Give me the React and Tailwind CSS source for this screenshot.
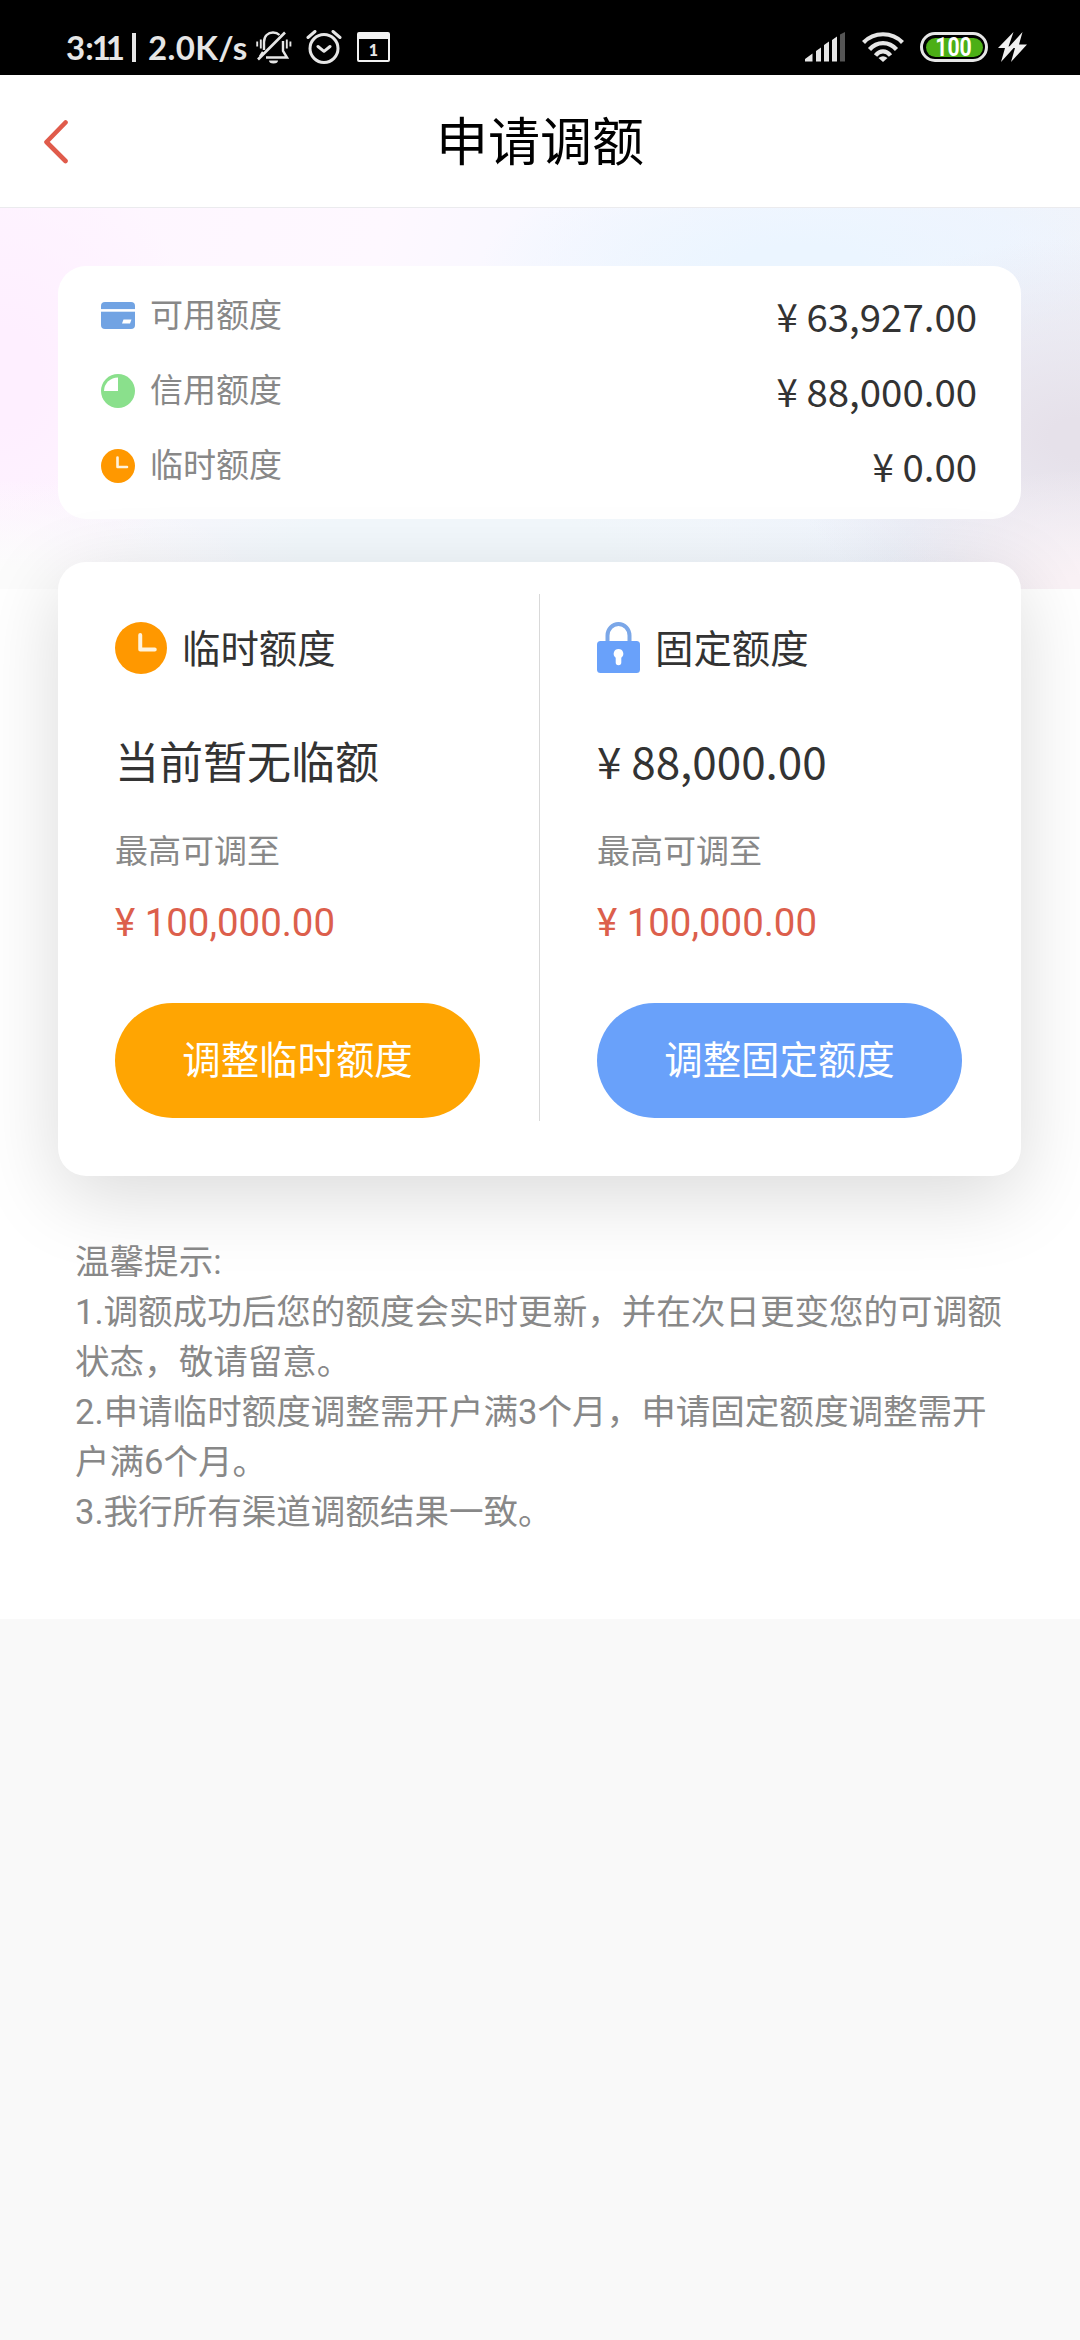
import React from 'react';

const SUMMARY = [
  { label: '可用额度', amount: '¥ 63,927.00', Icon: CardIcon },
  { label: '信用额度', amount: '¥ 88,000.00', Icon: PieIcon },
  { label: '临时额度', amount: '¥ 0.00', Icon: ClockIcon },
];

const TIPS = [
  '温馨提示:',
  '1.调额成功后您的额度会实时更新，并在次日更变您的可调额',
  '状态，敬请留意。',
  '2.申请临时额度调整需开户满3个月，申请固定额度调整需开',
  '户满6个月。',
  '3.我行所有渠道调额结果一致。',
];

function CardIcon() {
  return (
    <svg viewBox="0 0 34 34" className="w-[34px] h-[34px]">
      <rect x="0" y="3" width="34" height="27" rx="4" fill="#71a3e3" />
      <rect x="0" y="10.1" width="34" height="2.6" fill="#fff" />
      <path d="M22.5 20.5h8l-1.5 4h-8z" fill="#fff" />
    </svg>
  );
}

function PieIcon() {
  return (
    <svg viewBox="0 0 34 34" className="w-[34px] h-[34px]">
      <circle cx="17" cy="17" r="17" fill="#8ae08c" />
      <path d="M17 3.4V17H3A14 14 0 0 1 17 3.4z" fill="#fff" />
    </svg>
  );
}

function ClockIcon({ className = 'w-[34px] h-[34px]' }) {
  return (
    <svg viewBox="0 0 34 34" className={className}>
      <circle cx="17" cy="17" r="17" fill="#ff9800" />
      <path d="M16.5 8.5v9.5h9.5" fill="none" stroke="#fff3dc" strokeWidth="2.6" strokeLinecap="round" strokeLinejoin="round" />
    </svg>
  );
}

function LockIcon() {
  return (
    <svg viewBox="0 0 43 52" className="w-[43px] h-[52px]">
      <path d="M10.5 20V13.5a11 11.5 0 0 1 22 0V20" fill="none" stroke="#7ba7e8" strokeWidth="4" />
      <rect x="0" y="19" width="43" height="32" rx="3.5" fill="#69a1fa" />
      <path d="M21.5 27a4.8 4.8 0 0 1 2.8 8.7V40.5a2.8 2.8 0 0 1-5.6 0V35.7A4.8 4.8 0 0 1 21.5 27z" fill="#fff" />
    </svg>
  );
}

function StatusBar() {
  return (
    <div className="flex h-[75px] bg-black pl-[66px] text-[#e6e6e6] font-['Lato','Noto_Sans_CJK_SC',sans-serif]">
      <div className="flex h-[94px] items-center text-[33px] font-bold whitespace-pre leading-none">
        <span className="w-[66px]">
          3<span className="tracking-[-2px]">:</span>
          <span className="tracking-[-5px]">11</span>
        </span>
        <span className="block h-[29px] w-[4px] bg-[#e6e6e6]" />
        <span className="ml-[12px] w-[108px] tracking-[0.4px]">2.0K/s</span>
      </div>
      <div className="flex items-start pt-[30px]">
        {/* muted bell */}
        <svg viewBox="0 0 36 34" className="h-[34px] w-[36px]" fill="none" stroke="#e6e6e6" strokeWidth="2.4">
          <path d="M8 20V12C8 6 12 2.5 17 2.5c3 0 5 1 6.5 2.5M27 11v10l4 6.5H10M4 26.5L7 22" />
          <path d="M2 29.5L29 2.5" strokeWidth="2.6" />
          <path d="M1.2 11.5v5M4.8 9.5v9M30.8 9.5v9M34.4 11.5v5" strokeWidth="1.9" />
          <path d="M13 30.5h9a4.5 3 0 0 1-9 0z" fill="#e6e6e6" stroke="none" />
        </svg>
        {/* alarm */}
        <svg viewBox="0 0 36 34" className="ml-[14px] h-[34px] w-[36px]" fill="none" stroke="#e6e6e6" strokeWidth="3" strokeLinecap="round" strokeLinejoin="round">
          <circle cx="18" cy="18.5" r="14" />
          <path d="M12 16.5l6 4.8 6-4.8M2 7.5l7-6M34 7.5l-7-6" />
        </svg>
        {/* calendar */}
        <div className="ml-[15px] mt-[2px] flex h-[30px] w-[33px] items-center justify-center rounded-[2px] border-2 border-t-[7px] border-[#f2f2f2] text-[16px] font-black leading-none">
          1
        </div>
      </div>
      <div className="ml-auto mr-[53px] flex items-start pt-[32px]">
        <svg viewBox="0 0 41 30" className="h-[30px] w-[41px]" fill="#e6e6e6">
          <path d="M0 29.5V27L7.5 21.5V29.5zM11 29.5V19L16 15.5V29.5zM19 29.5V13L24 9.5V29.5zM27 29.5V8L32 4.5V29.5z" />
          <path d="M35 29.5V2.5L40 0V29.5z" fill="#555" />
        </svg>
        <svg viewBox="0 0 42 30" className="ml-[16px] h-[30px] w-[42px]" fill="none" stroke="#e6e6e6" strokeWidth="4.2">
          <path d="M1.5 10.5C12 -0.5 30 -0.5 40.5 10.5M7.5 17.5C15 9 27 9 34.5 17.5M13.5 23.5C18 18 24 18 28.5 23.5" />
          <path d="M16.5 26q4.5-3.5 9 0L21 30z" fill="#e6e6e6" stroke="none" />
        </svg>
        <div className="ml-[16px] flex h-[30px] w-[68px] items-center justify-center rounded-full border-[3px] border-[#e6e6e6]">
          <div className="flex h-[19px] w-[57px] items-center justify-center rounded-full bg-[#4caf16] font-['Roboto'] text-[25px] font-bold leading-none text-white">
            <span className="inline-block scale-x-85">100</span>
          </div>
        </div>
        <svg viewBox="0 0 29 30" className="ml-[10px] h-[30px] w-[29px]" fill="#f0f0f0">
          <path d="M15.5 0L0 16h7L3 30 17 14.5h-6.5z" />
          <path d="M24.5 0L10 16h7L13 30 29 12.5h-8z" />
        </svg>
      </div>
    </div>
  );
}

function LimitColumn({ icon, title, current, max, action, actionClass }) {
  return (
    <div className="flex w-[481px] flex-col pl-[57px] pt-[60px]">
      <div className="flex h-[52px] items-center">
        {icon}
        <span className="ml-[15px] pb-[3px] text-[38.4px] leading-[49px] text-[#333]">{title}</span>
      </div>
      <div className="mt-[53px] h-[66px] text-[44px] leading-[66px] text-[#333] whitespace-nowrap">{current}</div>
      <div className="mt-[31px] h-[50px] text-[33px] leading-[50px] text-[#888]">最高可调至</div>
      <div className="mt-[20px] h-[58px] text-[38.4px] leading-[58px] text-[#dc5f4c] font-['Roboto'] whitespace-nowrap">{max}</div>
      <button type="button" className={`mt-[51px] h-[115px] w-[365px] rounded-full pb-[7px] text-[38.4px] leading-none text-white ${actionClass}`}>
        {action}
      </button>
    </div>
  );
}

export default function App() {
  return (
    <div className="flex h-[2340px] w-[1080px] flex-col overflow-hidden bg-[#f9f9f9] font-['Noto_Sans_CJK_SC',sans-serif]">
      <StatusBar />

      <header className="flex h-[133px] items-center border-b border-[#ebebee] bg-white">
        <svg viewBox="0 0 26 44" className="ml-[43px] mt-px h-[44px] w-[26px]" fill="none" stroke="#e05b4b" strokeWidth="4.6" strokeLinecap="round" strokeLinejoin="round">
          <path d="M22.5 2.5L3.5 22L22.5 41" />
        </svg>
        <h1 className="mr-[69px] flex-1 pb-[4px] text-center text-[52px] leading-none text-black">申请调额</h1>
      </header>

      <main className="h-[1411px] shrink-0 bg-white">
        <div className="h-[381px] bg-[radial-gradient(ellipse_260px_110px_at_0px_381px,#fcfcfc_20%,#fcfcfc00_100%),radial-gradient(ellipse_200px_120px_at_1080px_381px,#faf2f6_10%,#faf2f600_100%),radial-gradient(ellipse_300px_200px_at_1080px_230px,#e6e1ea_10%,#e6e1ea00_100%),radial-gradient(ellipse_320px_110px_at_800px_60px,#ebf5ff_20%,#ebf5ff00_100%),radial-gradient(ellipse_200px_240px_at_0px_170px,#feefff_20%,#feefff00_100%),radial-gradient(ellipse_500px_130px_at_450px_340px,#f2f8fc_30%,#f2f8fc00_100%),linear-gradient(105deg,#fef5ff_0%,#fef8ff_33%,#f8f8ff_46%,#f3f6fe_65%,#eff4fd_85%,#f1f3f9_100%)] px-[58px] pt-[58px]">
          <section className="flex h-[253px] w-[963px] flex-col rounded-[28px] bg-white pl-[43px] pr-[44px] pt-[12px]">
            {SUMMARY.map(({ label, amount, Icon }) => (
              <div key={label} className="flex h-[75px] items-center">
                <div className="pt-px">
                  <Icon />
                </div>
                <span className="ml-[15px] pb-[4px] text-[33px] leading-[71px] text-[#888]">{label}</span>
                <span className="ml-auto text-[38.4px] leading-[75px] text-[#333]">{amount}</span>
              </div>
            ))}
          </section>
        </div>

        <section className="relative -mt-[27px] mx-[58px] flex h-[614px] w-[963px] rounded-[28px] bg-white shadow-[0_20px_80px_rgba(0,0,0,0.15)]">
          <LimitColumn
            icon={<ClockIcon className="h-[52px] w-[52px]" />}
            title="临时额度"
            current="当前暂无临额"
            max="¥ 100,000.00"
            action="调整临时额度"
            actionClass="bg-[#ffa502]"
          />
          <div className="mt-[32px] h-[527px] w-px bg-[#d9d9d9]" />
          <LimitColumn
            icon={<LockIcon />}
            title="固定额度"
            current="¥ 88,000.00"
            max="¥ 100,000.00"
            action="调整固定额度"
            actionClass="bg-[#69a1fa]"
          />
        </section>

        <div className="relative ml-[75px] mt-[61px] text-[34.56px] leading-[50px] text-[#888] whitespace-nowrap font-['Roboto','Noto_Sans_CJK_SC',sans-serif]">
          {TIPS.map((line) => (
            <p key={line}>{line}</p>
          ))}
        </div>
      </main>
    </div>
  );
}
